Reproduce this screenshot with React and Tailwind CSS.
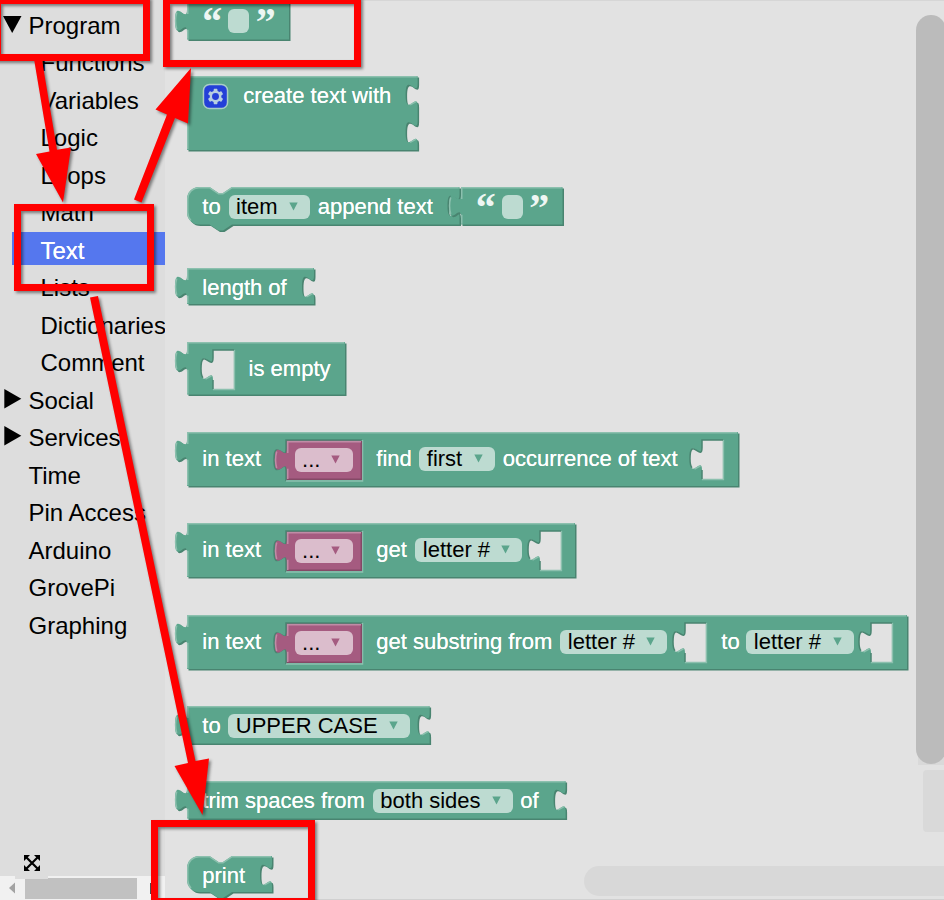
import React from "react";

const GREEN = { main: "#5ba58c", dark: "#498470", light: "#8cc0ae" };
const PINK = { main: "#a55b80", dark: "#844966", light: "#c08ca6" };

// Puzzle tab, drawn downwards and upwards (12px wide, 22.5px tall).
const TAB_DOWN = "v7.5 c0,15 -12,-12 -12,11.25 s12,-3.75 12,11.25";
const TAB_UP = "c0,-15 -12,12 -12,-11.25 s12,3.75 12,-11.25";

function outputPath(w, h, sockets) {
  let d = `M0,0 H${w} `;
  for (const y of sockets) d += `V${y} ${TAB_DOWN} `;
  return d + `V${h} H0 V30 ${TAB_UP} Z`;
}

function statementPath(w, h, sockets) {
  let d = `M0,12 A12,12 0 0 1 12,0 H22.5 l9,6 h4.5 l9,-6 H${w} `;
  for (const y of sockets) d += `V${y} ${TAB_DOWN} `;
  return d + `V${h} H45 l-9,6 h-4.5 l-9,-6 H12 A12,12 0 0 1 0,${h - 12} Z`;
}

function Shape({ w, h, kind = "output", sockets = [], colors = GREEN }) {
  const d = kind === "statement" ? statementPath(w, h, sockets) : outputPath(w, h, sockets);
  const edge =
    kind === "statement"
      ? `M4,${h - 4} A11.3,11.3 0 0 1 0.75,${h - 12} V12 A11.25,11.25 0 0 1 12,0.75 H22.5 l9,6 h4.5 l9,-6 H${w - 0.75}`
      : `M0.75,${h - 0.75} V27.75 m-11.04,-0.75 q-2.28,-8.25 0,-16.5 m11.04,1.5 V0.75 H${w - 0.75}`;
  return (
    <svg className="absolute left-0 top-0 overflow-visible" width={w} height={h}>
      <path d={d} fill={colors.dark} transform="translate(1.5,1.5)" />
      <path d={d} fill={colors.main} />
      <path d={edge} fill="none" stroke={colors.light} strokeWidth="1.5" />
      {sockets.map((y) => (
        <path key={y} d={`M${w - 7.5},${y + 28.9} l6,-3.2`} fill="none" stroke={colors.light} strokeWidth="1.5" />
      ))}
    </svg>
  );
}

function Block({ row, w, h, kind, sockets, pad = "pt-[7.5px]", children }) {
  return (
    <div className={`relative shrink-0 ${row}`}>
      <Shape w={w} h={h} kind={kind} sockets={sockets} />
      <div className={`relative flex items-start pl-[15px] ${pad}`}>{children}</div>
    </div>
  );
}

const Label = ({ w, children }) => (
  <span className={`shrink-0 whitespace-nowrap text-[22px] leading-6 text-white [text-shadow:0_0_0.6px_#fff] ${w}`}>{children}</span>
);

const Caret = ({ color = GREEN.main }) => (
  <svg className="mt-[7px] shrink-0" width="9" height="9" viewBox="0 0 9 9">
    <path d="M0.3,0.5 H8.7 L4.5,8.5 Z" fill={color} />
  </svg>
);

const Pill = ({ w, children }) => (
  <span className={`flex h-6 shrink-0 justify-between rounded-md bg-[#bddbd1] pl-[7.5px] pr-3 ${w}`}>
    <span className="whitespace-nowrap text-[22px] leading-6 text-black">{children}</span>
    <Caret />
  </span>
);

const Hole = ({ w }) => (
  <span className={`-mt-[7px] shrink-0 ${w}`}>
    <svg className="overflow-visible" width="21" height="39" viewBox="0 0 21 39">
      <path d={`M0,0 H21 V39 H0 V30 ${TAB_UP} Z`} fill="#e2e2e2" />
      <path d="M21.4,0 V39.4 H0" fill="none" stroke={GREEN.light} strokeWidth="1.5" />
      <path d="M-7.5,29 l6,-3.2" fill="none" stroke={GREEN.light} strokeWidth="1.5" />
      <path d="M21,0 H0 V7.5 c0,15 -12,-12 -12,11.25 q0,7 2,9 M0,30 V39" fill="none" stroke={GREEN.dark} strokeWidth="1.5" />
    </svg>
  </span>
);

const VariableBlock = () => (
  <span className="relative -mt-[6px] h-[39px] w-[74.5px] shrink-0">
    <svg className="absolute left-0 top-0 overflow-visible" width="75" height="39">
      <path d={`M-1,40 V30 ${TAB_UP} V-1 H75`} fill={PINK.main} stroke={GREEN.dark} strokeWidth="1.5" />
      <path d="M75.5,-1 V40 H-1" fill="none" stroke={GREEN.light} strokeWidth="1.5" />
      <path d={`M0,0 H75 V39 H0 V30 ${TAB_UP} Z`} fill={PINK.main} />
      <path d="M0,38.3 H74.3 V0" fill="none" stroke={PINK.dark} strokeWidth="1.5" />
      <path d="M0.75,38 V27.75 m-11.04,-0.75 q-2.28,-8.25 0,-16.5 m11.04,1.5 V0.75 H74" fill="none" stroke={PINK.light} strokeWidth="1.5" />
    </svg>
    <span className="relative ml-[7.3px] mt-[7px] flex h-6 w-[58.7px] justify-between rounded-md bg-[#dbbdcc] pl-[7.5px] pr-[13px]">
      <span className="text-[22px] leading-6 text-black">...</span>
      <Caret color={PINK.main} />
    </span>
  </span>
);

const Quote = ({ children }) => (
  <span className="h-6 w-[18px] shrink-0 text-center font-['Liberation_Serif',serif] text-[40px] font-bold leading-[25px] text-[#eef6f3]">
    {children}
  </span>
);

const TextValue = () => (
  <>
    <Quote>“</Quote>
    <span className="ml-2 mr-[6.5px] h-6 w-[21px] shrink-0 rounded-md bg-[#bddbd1]" />
    <Quote>”</Quote>
  </>
);

const Gear = () => (
  <svg className="ml-[0.7px] mr-[15.3px] mt-[0.7px] shrink-0 overflow-visible" width="25" height="25" viewBox="-0.3 -0.3 16.6 16.6">
    <rect width="16" height="16" rx="4" fill="#2440d8" stroke="#a9cdc6" />
    <path
      fill="#b7cfe0"
      d="m4.203,7.296 0,1.368 -0.92,0.677 -0.11,0.41 0.9,1.559 0.41,0.11 1.043,-0.457 1.187,0.683 0.127,1.134 0.3,0.3 1.8,0 0.3,-0.299 0.127,-1.138 1.185,-0.682 1.046,0.458 0.409,-0.11 0.9,-1.559 -0.11,-0.41 -0.92,-0.677 0,-1.366 0.92,-0.677 0.11,-0.41 -0.9,-1.559 -0.409,-0.109 -1.046,0.458 -1.185,-0.682 -0.127,-1.138 -0.3,-0.299 -1.8,0 -0.3,0.3 -0.126,1.135 -1.187,0.682 -1.043,-0.457 -0.41,0.11 -0.899,1.559 0.108,0.409z"
    />
    <circle cx="8" cy="8" r="2.3" fill="#2440d8" />
  </svg>
);

const categories = [
  { name: "Program", arrow: "down" },
  { name: "Functions", child: true },
  { name: "Variables", child: true },
  { name: "Logic", child: true },
  { name: "Loops", child: true },
  { name: "Math", child: true },
  { name: "Text", child: true, selected: true },
  { name: "Lists", child: true },
  { name: "Dictionaries", child: true },
  { name: "Comment", child: true },
  { name: "Social", arrow: "right" },
  { name: "Services", arrow: "right" },
  { name: "Time" },
  { name: "Pin Access" },
  { name: "Arduino" },
  { name: "GrovePi" },
  { name: "Graphing" },
];

function Category({ name, arrow, child, selected }) {
  return (
    <li className={`mb-[4.5px] flex h-[33px] shrink-0 items-center whitespace-nowrap ${child ? "ml-3 pl-[28.5px]" : "pl-[3px]"} ${selected ? "bg-[#5577ee] text-white [text-shadow:0_0_0.6px_#fff]" : "text-black"}`}>
      {!child && (
        <svg className="mr-[6.5px] shrink-0" width="19" height="24" viewBox="0 0 19 24">
          {arrow === "down" && <path d="M0,4 H18.5 L9.2,21 Z" />}
          {arrow === "right" && <path d="M1.3,2 V21.5 L18.3,11.8 Z" />}
        </svg>
      )}
      <span className="mt-[3.4px]">{name}</span>
    </li>
  );
}

function Sidebar() {
  return (
    <aside className="flex h-full w-[165px] shrink-0 flex-col overflow-hidden bg-[#dddddd]">
      <ul className="flex flex-1 flex-col pt-[7px] text-[24px] leading-[33px]">
        {categories.map((c) => (
          <Category key={c.name} {...c} />
        ))}
      </ul>
      <div className="relative z-10 -mb-[3px] ml-[15px] h-[33px] w-[33px] shrink-0 bg-[#dddddd] pl-[9px] pt-[9px]">
        <svg width="16" height="16" viewBox="0 0 16 16">
          <path d="M0,0 H6 L0,6 Z M16,0 V6 L10,0 Z M0,16 V10 L6,16 Z M16,16 H10 L16,10 Z" />
          <path d="M2.5,2.5 L13.5,13.5 M13.5,2.5 L2.5,13.5" stroke="#000" strokeWidth="2.2" />
        </svg>
      </div>
      <div className="flex h-6 shrink-0 items-center bg-[#f1f1f1]">
        <svg className="ml-[9px]" width="6" height="12" viewBox="0 0 6 12">
          <path d="M6,0.5 V11.5 L0,6 Z" fill="#a3a3a3" />
        </svg>
        <div className="ml-[10px] mt-px h-[21px] w-[112px] bg-[#c1c1c1]" />
        <div className="ml-[13px] h-[11px] w-[6px] bg-[#505050]" />
      </div>
    </aside>
  );
}

function Flyout() {
  return (
    <main className="relative h-full flex-1 overflow-hidden border-t border-[#d6d6d6] bg-[#e2e2e2]">
      <div className="flex flex-col pl-[22.3px] pt-[0.5px]">
        <Block row="h-[74.8px]" w={102} h={37.5}>
          <TextValue />
        </Block>
        <Block row="h-[111.2px]" w={230.6} h={74} sockets={[0, 37.5]}>
          <Gear />
          <Label w="w-[150px]">create text with</Label>
        </Block>
        <Block row="h-[81px]" w={272.5} h={37.5} kind="statement" sockets={[0]}>
          <Label w="w-[26.3px]">to</Label>
          <Pill w="w-[81.2px]">item</Pill>
          <Label w="ml-[8px] w-[136px]">append text</Label>
          <span className="relative -mt-[7.5px] ml-[7.7px] flex h-[37.5px] w-[101px] pl-[14.3px] pt-[7.5px]">
            <Shape w={101.5} h={37.5} />
            <span className="relative flex">
              <TextValue />
            </span>
          </span>
        </Block>
        <Block row="h-[73.5px]" w={127} h={36} sockets={[0]}>
          <Label w="w-[90px]">length of</Label>
        </Block>
        <Block row="h-[90.5px]" w={158} h={52.5} pad="pt-[15px]">
          <Hole w="ml-[10.3px] w-[36px]" />
          <Label w="w-[90px]">is empty</Label>
        </Block>
        <Block row="h-[91px]" w={551} h={54} pad="pt-[14.5px]">
          <Label w="w-[85px]">in text</Label>
          <VariableBlock />
          <Label w="ml-[14.5px] w-[43px]">find</Label>
          <Pill w="w-[75.5px]">first</Pill>
          <Label w="ml-[8px] w-[199.5px]">occurrence of text</Label>
          <Hole w="w-[22px]" />
        </Block>
        <Block row="h-[92px]" w={388} h={54} pad="pt-[14.5px]">
          <Label w="w-[85px]">in text</Label>
          <VariableBlock />
          <Label w="ml-[14.5px] w-[39px]">get</Label>
          <Pill w="w-[107px]">letter #</Pill>
          <Hole w="ml-[17.3px] w-[22px]" />
        </Block>
        <Block row="h-[90.8px]" w={720} h={54} pad="pt-[14.5px]">
          <Label w="w-[85px]">in text</Label>
          <VariableBlock />
          <Label w="ml-[14.5px] w-[184px]">get substring from</Label>
          <Pill w="w-[107px]">letter #</Pill>
          <Hole w="ml-[17.7px] w-[36.3px]" />
          <Label w="w-[25px]">to</Label>
          <Pill w="w-[107.5px]">letter #</Pill>
          <Hole w="ml-[17.7px] w-[22px]" />
        </Block>
        <Block row="h-[75.2px]" w={242.6} h={37.5} sockets={[0]}>
          <Label w="w-[26px]">to</Label>
          <Pill w="w-[182px]">UPPER CASE</Pill>
        </Block>
        <Block row="h-[74.8px]" w={378.6} h={37.5} sockets={[0]}>
          <Label w="w-[170.5px]">trim spaces from</Label>
          <Pill w="w-[140px]">both sides</Pill>
          <Label w="ml-[7.5px] w-[20px]">of</Label>
        </Block>
        <Block row="h-[44px]" w={85} h={36} kind="statement" sockets={[0]}>
          <Label w="w-[50px]">print</Label>
        </Block>
      </div>
      <div className="absolute left-[753px] top-[747px] h-[17px] w-[26px] bg-[#d9d9d9]" />
      <div className="absolute left-[751px] top-[14px] h-[749px] w-[30px] rounded-full bg-[#bbbbbb]" />
      <div className="absolute left-[757.5px] top-[769px] h-[62px] w-[30px] rounded bg-[#d9d9d9]" />
      <div className="absolute left-[419px] top-[864.5px] h-[30px] w-[400px] rounded-full bg-[#d8d8d8]" />
      <div className="absolute left-0 top-[898px] h-px w-full bg-[#d0d0d0]" />
    </main>
  );
}

function Annotations() {
  return (
    <svg className="pointer-events-none absolute left-0 top-0 z-20" width="944" height="900">
      <g className="[filter:drop-shadow(2px_2px_1.5px_rgba(0,0,0,0.45))]">
        <g fill="none" stroke="#ff0000" strokeWidth="7">
          <rect x="-2.5" y="0.5" width="149" height="57" />
          <rect x="166.5" y="0.5" width="191" height="63" />
          <rect x="17.5" y="207.5" width="133" height="80" />
          <rect x="154.5" y="823.5" width="157" height="78" />
        </g>
        <g fill="#ff0000">
          <path d="M33.5,56 L41,54 L57,149.7 L71,147.5 L63,202.5 L36,154 L49.5,151.5 Z" />
          <path d="M134,199.5 L167,114.5 L155.5,109.5 L191,68 L188,123.5 L175,118 L141.5,202.5 Z" />
          <path d="M90,297.5 L98,296 L195.5,761 L209,758.5 L202.5,815 L174.5,766 L188,763 Z" />
        </g>
      </g>
    </svg>
  );
}

export default function App() {
  return (
    <div className="relative flex h-[900px] w-[944px] overflow-hidden bg-[#e2e2e2] font-['Liberation_Sans',Arial,sans-serif]">
      <Sidebar />
      <Flyout />
      <Annotations />
    </div>
  );
}
